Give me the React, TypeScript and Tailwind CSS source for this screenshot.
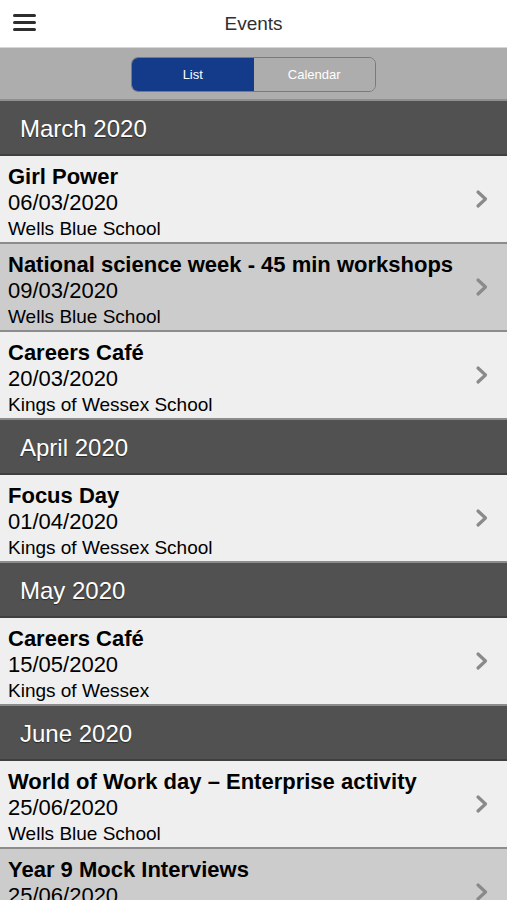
import React from 'react';

type Event = { title: string; date: string; place: string };
type Section = { month: string; events: Event[] };

const sections: Section[] = [
  {
    month: 'March 2020',
    events: [
      { title: 'Girl Power', date: '06/03/2020', place: 'Wells Blue School' },
      { title: 'National science week - 45 min workshops', date: '09/03/2020', place: 'Wells Blue School' },
      { title: 'Careers Café', date: '20/03/2020', place: 'Kings of Wessex School' },
    ],
  },
  {
    month: 'April 2020',
    events: [{ title: 'Focus Day', date: '01/04/2020', place: 'Kings of Wessex School' }],
  },
  {
    month: 'May 2020',
    events: [{ title: 'Careers Café', date: '15/05/2020', place: 'Kings of Wessex' }],
  },
  {
    month: 'June 2020',
    events: [
      { title: 'World of Work day – Enterprise activity', date: '25/06/2020', place: 'Wells Blue School' },
      { title: 'Year 9 Mock Interviews', date: '25/06/2020', place: 'Wells Blue School' },
    ],
  },
];

function Chevron() {
  return (
    <svg width="14" height="20" viewBox="0 0 14 20" className="shrink-0">
      <path d="M3 3 L10.5 10 L3 17" fill="none" stroke="#8a8a8a" strokeWidth="3.2" strokeLinecap="round" strokeLinejoin="round" />
    </svg>
  );
}

export default function App() {
  return (
    <div className="h-[900px] w-[507px] overflow-hidden bg-white font-['Liberation_Sans',Arial,sans-serif]">
      {/* Top bar */}
      <header className="relative flex h-[48px] items-center justify-center border-b border-[#d6d6d6] bg-white">
        <button className="absolute left-[13px] top-[14px] flex w-[23px] flex-col gap-[4px]">
          <span className="h-[3px] rounded-full bg-[#2e2e2e]" />
          <span className="h-[3px] rounded-full bg-[#2e2e2e]" />
          <span className="h-[3px] rounded-full bg-[#2e2e2e]" />
        </button>
        <h1 className="pt-[1px] text-[19px] text-[#2f2f2f]">Events</h1>
      </header>

      {/* Segmented control */}
      <div className="flex h-[53px] items-center justify-center border-b-2 border-[#8f8f8f] bg-[#adadad] pt-[2px]">
        <div className="flex h-[35px] w-[245px] overflow-hidden rounded-[7px] border-[1.5px] border-[#7a7a7a]">
          <div className="flex flex-1 items-center justify-center bg-[#143a8a] text-[13px] text-white">List</div>
          <div className="flex flex-1 items-center justify-center bg-[#adadad] text-[13px] text-white">Calendar</div>
        </div>
      </div>

      {sections.map((s) => (
        <section key={s.month}>
          <div className="flex h-[55px] items-center border-b-2 border-[#3f3f3f] bg-[#515151] pl-[20px] pt-[2px] text-[24px] text-white [text-shadow:0_1px_1px_rgba(0,0,0,0.5)]">
            {s.month}
          </div>
          {s.events.map((e, i) => (
            <div
              key={e.title + i}
              className={`flex h-[88px] items-center justify-between border-b-2 border-[#8c8c8c] pl-[8px] pr-[18px] ${
                i % 2 === 0 ? 'bg-[#efefef]' : 'bg-[#cccccc]'
              }`}
            >
              <div className="flex flex-col pt-[7px] leading-[26px] text-black">
                <span className="text-[22px] font-bold">{e.title}</span>
                <span className="text-[22px]">{e.date}</span>
                <span className="text-[19px]">{e.place}</span>
              </div>
              <Chevron />
            </div>
          ))}
        </section>
      ))}
    </div>
  );
}
